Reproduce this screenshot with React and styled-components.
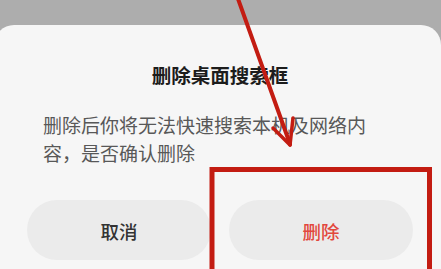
import React from 'react';
import styled, { createGlobalStyle } from 'styled-components';

const GlobalStyle = createGlobalStyle`
  html, body {
    margin: 0;
    padding: 0;
    background: #adadad;
    overflow: hidden;
  }
  body {
    font-family: "Noto Sans CJK SC", "Noto Sans", sans-serif;
  }
`;

const Screen = styled.div`
  position: relative;
  width: 441px;
  height: 269px;
  overflow: hidden;
  background: #adadad;
  padding-top: 25px;
  box-sizing: border-box;
`;

const Sheet = styled.div`
  margin-left: -6px;
  width: 447px;
  height: 260px;
  box-sizing: border-box;
  background: #f6f6f6;
  border-radius: 20px 20px 0 0;
  padding: 36px 28px 0 33px;
  display: flex;
  flex-direction: column;
`;

const Title = styled.div`
  font-size: 19.5px;
  line-height: 28px;
  font-weight: 700;
  color: #1c1c1c;
  text-align: center;
`;

const Message = styled.div`
  margin-top: 22px;
  padding-left: 16px;
  width: 335px;
  font-size: 19px;
  line-height: 28px;
  color: #585858;
`;

const Actions = styled.div`
  margin-top: 33px;
  display: flex;
  gap: 18px;
`;

const Button = styled.button`
  flex: 1;
  height: 60px;
  border: none;
  border-radius: 30px;
  background: #ebebeb;
  font-family: inherit;
  font-size: 18.5px;
  font-weight: 500;
  color: ${p => (p.$danger ? '#e2473d' : '#333333')};
  padding: 0;
  padding-top: 2px;
`;

const Annotation = styled.svg`
  position: absolute;
  left: 0;
  top: 0;
  pointer-events: none;
`;

export default function App() {
  return (
    <Screen>
      <GlobalStyle />
      <Sheet>
        <Title>删除桌面搜索框</Title>
        <Message>删除后你将无法快速搜索本机及网络内容，是否确认删除</Message>
        <Actions>
          <Button>取消</Button>
          <Button $danger>删除</Button>
        </Actions>
      </Sheet>
      {/* red markup drawn over the screenshot */}
      <Annotation width="441" height="269" viewBox="0 0 441 269">
        <g stroke="#c31c12" fill="none" strokeLinecap="round">
          <line x1="237" y1="-4" x2="290" y2="144" strokeWidth="4" />
          <line x1="273" y1="128" x2="290" y2="145" strokeWidth="3.5" />
          <line x1="293" y1="118" x2="290" y2="145" strokeWidth="3.5" />
        </g>
        <path
          d="M212 280 V169.5 H429.5 V280"
          stroke="#c31c12"
          strokeWidth="5"
          fill="none"
        />
      </Annotation>
    </Screen>
  );
}
